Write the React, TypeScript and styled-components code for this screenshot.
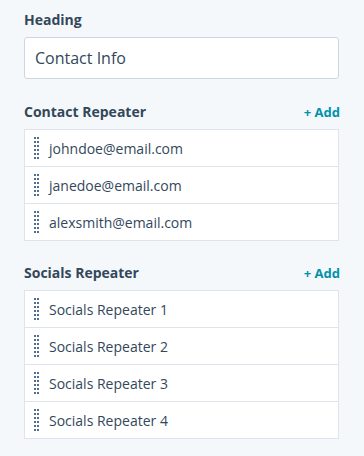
import React from 'react'
import styled, { createGlobalStyle } from 'styled-components'

const GlobalStyle = createGlobalStyle`
  html, body {
    margin: 0;
    padding: 0;
    background: #f5f8fa;
  }
  body {
    font-family: "Open Sans", "Noto Sans", sans-serif;
    color: #33475b;
  }
`

interface IRepeaterProps {
  title: string
  items: string[]
}

const DragHandle: React.FC = () => (
  <Handle>
    {Array.from({ length: 12 }).map((_, i) => (
      <Dot key={i} />
    ))}
  </Handle>
)

const Repeater: React.FC<IRepeaterProps> = ({ title, items }) => {
  return (
    <Section>
      <SectionHeader>
        <Label>{title}</Label>
        <AddLink>+ Add</AddLink>
      </SectionHeader>
      <List>
        {items.map((item) => (
          <Row key={item}>
            <DragHandle />
            <RowText>{item}</RowText>
          </Row>
        ))}
      </List>
    </Section>
  )
}

const App: React.FC = () => {
  return (
    <>
      <GlobalStyle />
      <Panel>
        <Field>
          <Label>Heading</Label>
          <Input defaultValue="Contact Info" />
        </Field>
        <Repeater
          title="Contact Repeater"
          items={['johndoe@email.com', 'janedoe@email.com', 'alexsmith@email.com']}
        />
        <Repeater
          title="Socials Repeater"
          items={['Socials Repeater 1', 'Socials Repeater 2', 'Socials Repeater 3', 'Socials Repeater 4']}
        />
      </Panel>
    </>
  )
}

export default App

const Panel = styled.div`
  width: 364px;
  height: 456px;
  box-sizing: border-box;
  padding: 10px 25px 0 24px;
  background: #f5f8fa;
  display: flex;
  flex-direction: column;
  gap: 23px;
`
const Field = styled.div`
  display: flex;
  flex-direction: column;
  gap: 7px;
`
const Label = styled.div`
  font-size: 14px;
  font-weight: 700;
  line-height: 20px;
  color: #33475b;
`
const Input = styled.input`
  box-sizing: border-box;
  width: 100%;
  height: 42px;
  padding: 0 10px;
  border: 1px solid #cbd6e2;
  border-radius: 3px;
  background: #ffffff;
  font-family: inherit;
  font-size: 16px;
  color: #33475b;
  outline: none;
`
const Section = styled.div`
  display: flex;
  flex-direction: column;
  gap: 7px;

  & + & {
    margin-top: -1px;
  }
`
const SectionHeader = styled.div`
  display: flex;
  justify-content: space-between;
  align-items: center;
`
const AddLink = styled.a`
  font-size: 13px;
  font-weight: 700;
  color: #0091ae;
  cursor: pointer;
  margin-right: -1px;
`
const List = styled.div`
  border: 1px solid #dfe3eb;
  background: #ffffff;
`
const Row = styled.div`
  height: 36px;
  display: flex;
  align-items: center;
  gap: 10px;
  padding-left: 9px;

  & + & {
    border-top: 1px solid #dfe3eb;
  }
`
const Handle = styled.div`
  display: grid;
  grid-template-columns: repeat(2, 2px);
  grid-auto-rows: 2px;
  column-gap: 1px;
  row-gap: 2px;
`
const Dot = styled.span`
  width: 2px;
  height: 2px;
  background: #516f90;
`
const RowText = styled.span`
  font-size: 14px;
  color: #33475b;
`
